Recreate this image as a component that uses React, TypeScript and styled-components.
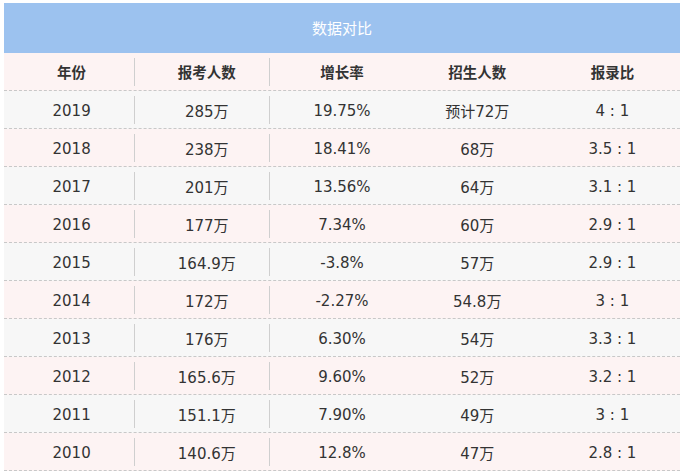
import React from "react";
import styled, { createGlobalStyle } from "styled-components";

const GlobalStyle = createGlobalStyle`
  html, body {
    margin: 0;
    padding: 0;
    background: #ffffff;
  }
  body {
    font-family: "DejaVu Sans", "Noto Sans CJK SC", sans-serif;
    color: #333333;
  }
`;

const Page = styled.div`
  padding: 3px 10px 0 4px;
  width: 676px;
`;

const Table = styled.div`
  display: flex;
  flex-direction: column;
  width: 676px;
`;

const Title = styled.div`
  height: 50px;
  background: #9cc2ef;
  color: #ffffff;
  font-family: "Noto Sans CJK SC", sans-serif;
  font-size: 15px;
  display: flex;
  align-items: center;
  justify-content: center;
  padding-bottom: 1px;
  box-sizing: border-box;
`;

const Row = styled.div<{ $tone: "pink" | "gray" }>`
  display: grid;
  grid-template-columns: repeat(5, 1fr);
  height: 37px;
  background: ${(p) => (p.$tone === "pink" ? "#fdf3f3" : "#f7f7f7")};
  border-bottom: 1px dashed #c8c8c8;
`;

const Cell = styled.div<{ $divider?: boolean; $head?: boolean }>`
  position: relative;
  display: flex;
  align-items: center;
  justify-content: center;
  box-sizing: border-box;
  padding-top: ${(p) => (p.$head ? "0" : "2px")};
  font-size: ${(p) => (p.$head ? "14.5px" : "15px")};
  font-weight: ${(p) => (p.$head ? 700 : 400)};
  font-family: ${(p) =>
    p.$head ? `"Noto Sans CJK SC", sans-serif` : `"DejaVu Sans", "Noto Sans CJK SC", sans-serif`};
  color: #333333;
  &::after {
    content: "";
    display: ${(p) => (p.$divider ? "block" : "none")};
    position: absolute;
    right: 4px;
    top: 5px;
    bottom: 4px;
    width: 1px;
    background: #cfcfcf;
  }
`;

const headers = ["年份", "报考人数", "增长率", "招生人数", "报录比"];

const data: string[][] = [
  ["2019", "285万", "19.75%", "预计72万", "4 : 1"],
  ["2018", "238万", "18.41%", "68万", "3.5 : 1"],
  ["2017", "201万", "13.56%", "64万", "3.1 : 1"],
  ["2016", "177万", "7.34%", "60万", "2.9 : 1"],
  ["2015", "164.9万", "-3.8%", "57万", "2.9 : 1"],
  ["2014", "172万", "-2.27%", "54.8万", "3 : 1"],
  ["2013", "176万", "6.30%", "54万", "3.3 : 1"],
  ["2012", "165.6万", "9.60%", "52万", "3.2 : 1"],
  ["2011", "151.1万", "7.90%", "49万", "3 : 1"],
  ["2010", "140.6万", "12.8%", "47万", "2.8 : 1"],
];

export default function App() {
  return (
    <>
      <GlobalStyle />
      <Page>
        <Table>
          <Title>数据对比</Title>
          <Row $tone="pink">
            {headers.map((h, i) => (
              <Cell key={h} $head $divider={i < 2}>
                {h}
              </Cell>
            ))}
          </Row>
          {data.map((r, ri) => (
            <Row key={r[0]} $tone={ri % 2 === 0 ? "gray" : "pink"}>
              {r.map((c, ci) => (
                <Cell key={ci} $divider={ci < 2}>
                  {c}
                </Cell>
              ))}
            </Row>
          ))}
        </Table>
      </Page>
    </>
  );
}
